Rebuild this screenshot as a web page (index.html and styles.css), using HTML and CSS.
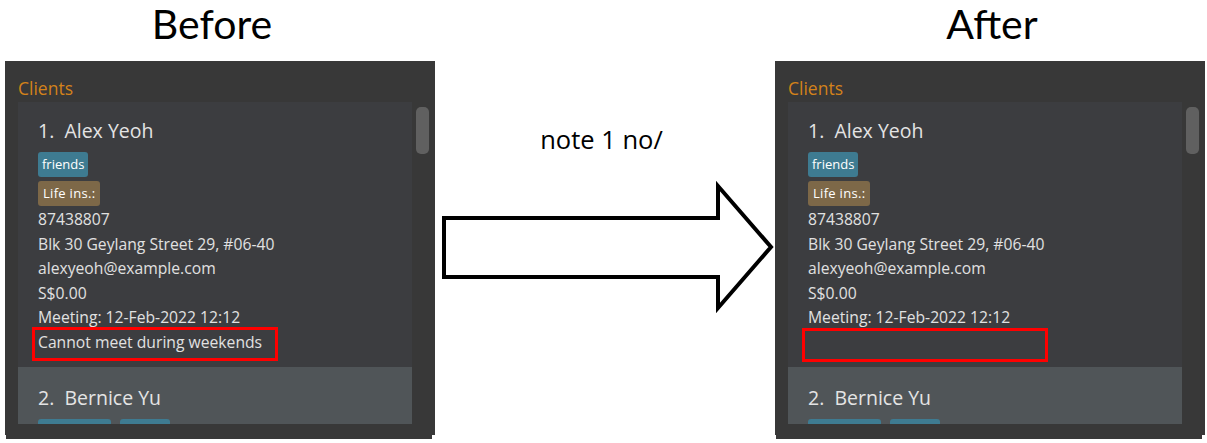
FILE: index.html
```html
<!DOCTYPE html>
<html>
<head>
<meta charset="utf-8">
<link rel="stylesheet" href="styles.css">
</head>
<body>
<div class="stage">
  <section class="side">
    <h1 class="title title-before">Before</h1>
    <div class="panel">
      <div class="panel-label">Clients</div>
      <div class="panel-body">
        <div class="list">
          <div class="card">
            <div class="name">1.  Alex Yeoh</div>
            <div class="tags"><span class="tag tag-blue">friends</span></div>
            <div class="tags tags-last"><span class="tag tag-brown">Life ins.:</span></div>
            <div class="line">87438807</div>
            <div class="line">Blk 30 Geylang Street 29, #06-40</div>
            <div class="line">alexyeoh@example.com</div>
            <div class="line">S$0.00</div>
            <div class="line">Meeting: 12-Feb-2022 12:12</div>
            <div class="line note">Cannot meet during weekends<span class="highlight"></span></div>
          </div>
          <div class="card card-selected">
            <div class="name">2.  Bernice Yu</div>
            <div class="tags tags-row"><span class="tag tag-blue tag-w1"></span><span class="tag tag-blue tag-w2"></span></div>
          </div>
        </div>
        <div class="scrollbar"></div>
      </div>
    </div>
    <div class="panel-foot"></div>
  </section>

  <div class="middle">
    <p class="cmd">note 1 no/</p>
    <svg class="arrow" width="340" height="160" viewBox="0 0 340 160">
      <polygon points="9,48 283,48 283,16 336,77 283,138 283,107 9,107" fill="#ffffff" stroke="#000000" stroke-width="4" stroke-linejoin="miter"/>
    </svg>
  </div>

  <section class="side">
    <h1 class="title title-after">After</h1>
    <div class="panel">
      <div class="panel-label">Clients</div>
      <div class="panel-body">
        <div class="list">
          <div class="card">
            <div class="name">1.  Alex Yeoh</div>
            <div class="tags"><span class="tag tag-blue">friends</span></div>
            <div class="tags tags-last"><span class="tag tag-brown">Life ins.:</span></div>
            <div class="line">87438807</div>
            <div class="line">Blk 30 Geylang Street 29, #06-40</div>
            <div class="line">alexyeoh@example.com</div>
            <div class="line">S$0.00</div>
            <div class="line">Meeting: 12-Feb-2022 12:12</div>
            <div class="line note"><span class="highlight highlight-after"></span></div>
          </div>
          <div class="card card-selected">
            <div class="name">2.  Bernice Yu</div>
            <div class="tags tags-row"><span class="tag tag-blue tag-w1"></span><span class="tag tag-blue tag-w2"></span></div>
          </div>
        </div>
        <div class="scrollbar"></div>
      </div>
    </div>
    <div class="panel-foot"></div>
  </section>
</div>
</body>
</html>
```

FILE: styles.css
```css
html, body {
  margin: 0;
  padding: 0;
  background: #ffffff;
}

body {
  width: 1207px;
  height: 443px;
  overflow: hidden;
  font-family: "Open Sans", "Noto Sans", sans-serif;
}

.stage {
  display: flex;
  align-items: flex-start;
  padding-left: 5px;
}

.side {
  width: 430px;
  flex: none;
  display: flex;
  flex-direction: column;
}

.title {
  margin: 0 0 13px 0;
  height: 48px;
  font-family: "Lato", "Open Sans", sans-serif;
  font-size: 41px;
  line-height: 48px;
  font-weight: 400;
  color: #000000;
  text-align: center;
}

.title-before {
  padding-right: 16px;
}

.title-after {
  padding-left: 4px;
}

.panel {
  height: 374px;
  box-sizing: border-box;
  background: #383838;
  padding: 15px 6px 11px 13px;
  display: flex;
  flex-direction: column;
}

.panel-foot {
  height: 4px;
  margin: 0 3px 0 1px;
  background: #383838;
}

.panel-label {
  height: 24px;
  margin-bottom: 2px;
  font-size: 17.5px;
  line-height: 24px;
  color: #d4821a;
}

.panel-body {
  flex: 1;
  display: flex;
  gap: 4px;
  min-height: 0;
}

.list {
  width: 394px;
  height: 322px;
  overflow: hidden;
  background: #3c3d40;
}

.scrollbar {
  width: 13px;
  height: 47px;
  margin-top: 5px;
  border-radius: 5px;
  background: #606060;
}

.card {
  padding: 14.5px 10px 12.5px 20px;
  color: #e1e1e1;
}

.card-selected {
  background: #505558;
  padding-top: 17px;
}

.name {
  font-size: 19.5px;
  line-height: 28px;
  white-space: pre;
  color: #e4e4e4;
}

.tags {
  display: flex;
  gap: 9px;
  margin-top: 4px;
}

.name + .tags {
  margin-top: 7px;
}

.tags-last {
  margin-bottom: 1.5px;
}

.tag {
  display: inline-block;
  height: 25px;
  padding: 0 4px;
  border-radius: 3px;
  font-size: 13px;
  line-height: 25px;
  color: #ffffff;
}

.tag-blue {
  background: #3e7b91;
}

.tag-brown {
  background: #7d6848;
  padding: 0 5px;
  letter-spacing: 0.3px;
}

.tag-w1 {
  width: 65px;
}

.tag-w2 {
  width: 42px;
}

.line {
  font-size: 15.7px;
  line-height: 24.5px;
  height: 24.5px;
  white-space: nowrap;
}

.note {
  position: relative;
}

.highlight {
  position: absolute;
  left: -6px;
  top: -3px;
  width: 246px;
  height: 34px;
  box-sizing: border-box;
  border: 3px solid #ff0000;
}

.highlight-after {
  top: -1.5px;
}

.middle {
  width: 340px;
  flex: none;
  display: flex;
  flex-direction: column;
  align-items: center;
}

.cmd {
  margin: 124px 7px 0 0;
  font-size: 25.5px;
  line-height: 30px;
  color: #000000;
}

.arrow {
  display: block;
  margin-top: 16px;
}
```
